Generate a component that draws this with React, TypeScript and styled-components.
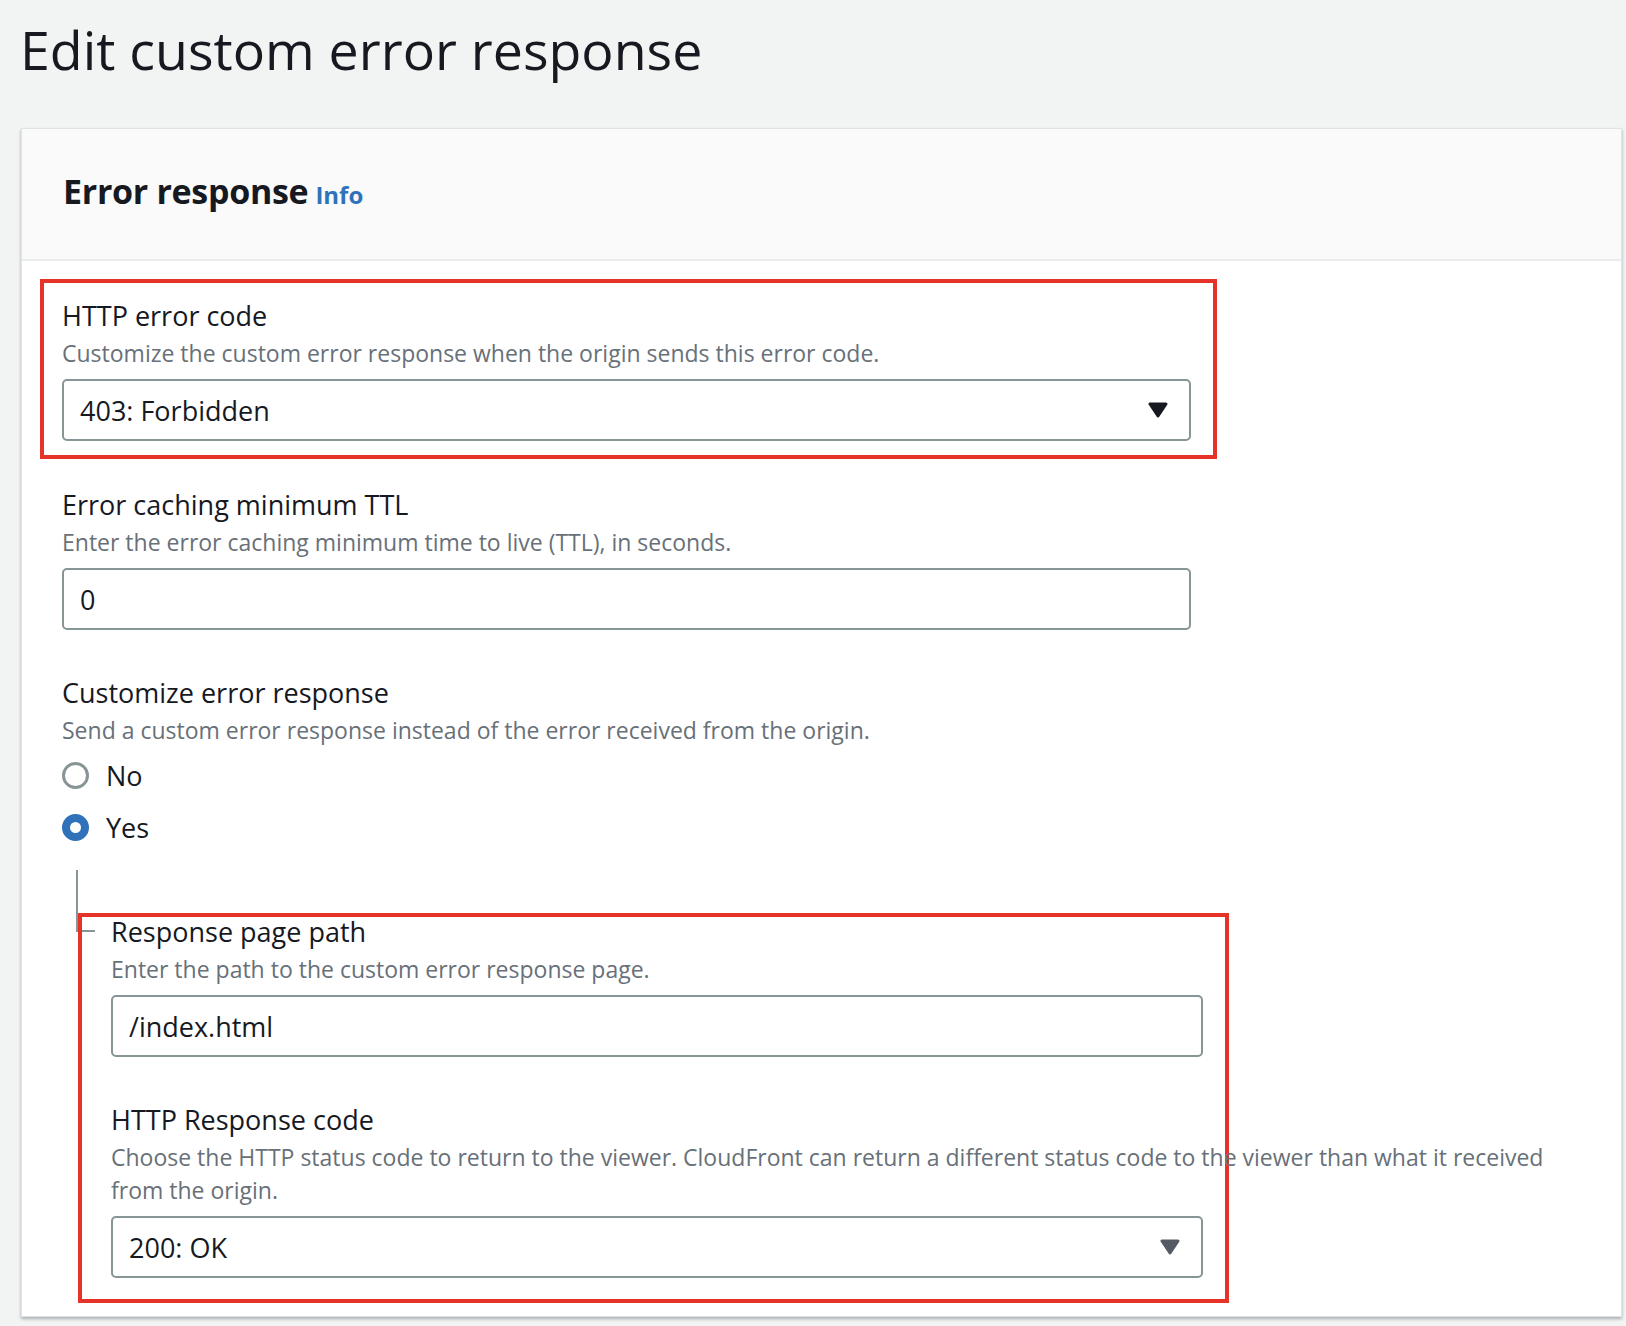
import React, { useState } from 'react';
import styled, { createGlobalStyle } from 'styled-components';

const color = {
  PAGE: '#f2f3f3',
  TEXT: '#16191f',
  MUTED: '#687078',
  BORDER: '#879596',
  BLUE: '#2f72ba',
  RED: '#e53329',
  DIVIDER: '#eaeded',
};

const GlobalStyle = createGlobalStyle`
  body {
    margin: 0;
    background-color: ${color.PAGE};
    font-family: 'Open Sans', 'Noto Sans', sans-serif;
    color: ${color.TEXT};
  }
`;

const StyledPage = styled.div`
  padding: 13px 4px 9px 21px;
`;

const StyledTitle = styled.h1`
  margin: 0 0 41px -1px;
  font-size: 53.7px;
  font-weight: 400;
  line-height: 74px;
`;

const StyledCard = styled.section`
  background-color: #fff;
  border: 1px solid #dfe3e3;
  box-shadow: 0 2px 3px rgba(0, 28, 36, 0.3);
`;

const StyledCardHeader = styled.header`
  display: flex;
  align-items: baseline;
  gap: 7px;
  padding: 39px 40px 45px 41px;
  background-color: #fafafa;
  border-bottom: 2px solid ${color.DIVIDER};
`;

const StyledCardTitle = styled.h2`
  margin: 0;
  font-size: 34px;
  font-weight: 700;
  line-height: 46px;
  letter-spacing: -0.3px;
`;

const StyledInfoLink = styled.a`
  font-size: 24px;
  font-weight: 700;
  color: ${color.BLUE};
  text-decoration: none;
`;

const StyledCardBody = styled.div`
  display: flex;
  flex-direction: column;
  align-items: flex-start;
  padding: 18px 40px 13px 40px;
`;

// red annotation frame drawn around a group of fields
const StyledHighlight = styled.div<{ $width: number; $offset: number; $pad: string }>`
  position: relative;
  z-index: 1;
  box-sizing: border-box;
  width: ${({ $width }) => $width}px;
  margin-left: ${({ $offset }) => $offset}px;
  padding: ${({ $pad }) => $pad};
  border: 4px solid ${color.RED};
`;

const StyledField = styled.div<{ $gap?: number }>`
  display: flex;
  flex-direction: column;
  margin-top: ${({ $gap }) => $gap || 0}px;
`;

const StyledLabel = styled.label`
  font-size: 27px;
  line-height: 37px;
  color: ${color.TEXT};
`;

const StyledDescription = styled.p<{ $width?: number }>`
  margin: 3px 0 0;
  font-size: 23px;
  line-height: 33px;
  color: ${color.MUTED};
  ${({ $width }) => $width && `width: ${$width}px;`}
`;

const StyledControl = styled.div<{ $width: number }>`
  box-sizing: border-box;
  display: flex;
  align-items: center;
  justify-content: space-between;
  width: ${({ $width }) => $width}px;
  height: 62px;
  margin-top: 9px;
  padding: 0 21px 0 16px;
  border: 2px solid ${color.BORDER};
  border-radius: 5px;
  background-color: #fff;
  font-size: 27px;
  color: ${color.TEXT};
`;

const StyledRadioGroup = styled.div`
  display: flex;
  flex-direction: column;
  gap: 15px;
  margin-top: 10px;
`;

const StyledRadioRow = styled.div`
  display: flex;
  align-items: center;
  gap: 17px;
  height: 37px;
  font-size: 27px;
  cursor: pointer;
`;

const StyledRadioCircle = styled.span<{ $checked: boolean }>`
  box-sizing: border-box;
  width: 27px;
  height: 27px;
  border-radius: 50%;
  background-color: #fff;
  border: ${({ $checked }) =>
    $checked ? `8px solid ${color.BLUE}` : `3px solid ${color.BORDER}`};
`;

// nested options under "Yes", with the tree connector on the left
const StyledNested = styled.div`
  position: relative;
  margin-top: 24px;
  padding-top: 43px;

  &::before,
  &::after {
    content: '';
    position: absolute;
    left: 14px;
    background-color: ${color.BORDER};
  }
  &::before {
    top: 0;
    width: 2px;
    height: 62px;
  }
  &::after {
    top: 60px;
    width: 19px;
    height: 2px;
  }
`;

const Caret = ({ fill }: { fill: string }) => (
  <svg width='20' height='16' viewBox='0 0 20 16'>
    <path
      d='M2 2 L18 2 L10 14 Z'
      fill={fill}
      stroke={fill}
      strokeWidth='3'
      strokeLinejoin='round'
    />
  </svg>
);

const App = () => {
  const [customize, setCustomize] = useState(true);

  return (
    <StyledPage>
      <GlobalStyle />
      <StyledTitle>Edit custom error response</StyledTitle>
      <StyledCard>
        <StyledCardHeader>
          <StyledCardTitle>Error response</StyledCardTitle>
          <StyledInfoLink href='#'>Info</StyledInfoLink>
        </StyledCardHeader>
        <StyledCardBody>
          <StyledHighlight $width={1177} $offset={-22} $pad='14px 22px 14px 18px'>
            <StyledField>
              <StyledLabel>HTTP error code</StyledLabel>
              <StyledDescription>
                Customize the custom error response when the origin sends this error code.
              </StyledDescription>
              <StyledControl $width={1129}>
                <span>403: Forbidden</span>
                <Caret fill={color.TEXT} />
              </StyledControl>
            </StyledField>
          </StyledHighlight>

          <StyledField $gap={27}>
            <StyledLabel>Error caching minimum TTL</StyledLabel>
            <StyledDescription>
              Enter the error caching minimum time to live (TTL), in seconds.
            </StyledDescription>
            <StyledControl $width={1129}>
              <span>0</span>
            </StyledControl>
          </StyledField>

          <StyledField $gap={44}>
            <StyledLabel>Customize error response</StyledLabel>
            <StyledDescription>
              Send a custom error response instead of the error received from the origin.
            </StyledDescription>
            <StyledRadioGroup>
              <StyledRadioRow onClick={() => setCustomize(false)}>
                <StyledRadioCircle $checked={!customize} />
                No
              </StyledRadioRow>
              <StyledRadioRow onClick={() => setCustomize(true)}>
                <StyledRadioCircle $checked={customize} />
                Yes
              </StyledRadioRow>
            </StyledRadioGroup>
          </StyledField>

          <StyledNested>
            <StyledHighlight $width={1151} $offset={16} $pad='0 22px 21px 29px'>
              <StyledField $gap={-4}>
                <StyledLabel>Response page path</StyledLabel>
                <StyledDescription>Enter the path to the custom error response page.</StyledDescription>
                <StyledControl $width={1092}>
                  <span>/index.html</span>
                </StyledControl>
              </StyledField>
              <StyledField $gap={44}>
                <StyledLabel>HTTP Response code</StyledLabel>
                <StyledDescription $width={1455}>
                  Choose the HTTP status code to return to the viewer. CloudFront can return a
                  different status code to the viewer than what it received from the origin.
                </StyledDescription>
                <StyledControl $width={1092}>
                  <span>200: OK</span>
                  <Caret fill='#545b64' />
                </StyledControl>
              </StyledField>
            </StyledHighlight>
          </StyledNested>
        </StyledCardBody>
      </StyledCard>
    </StyledPage>
  );
};

export default App;
